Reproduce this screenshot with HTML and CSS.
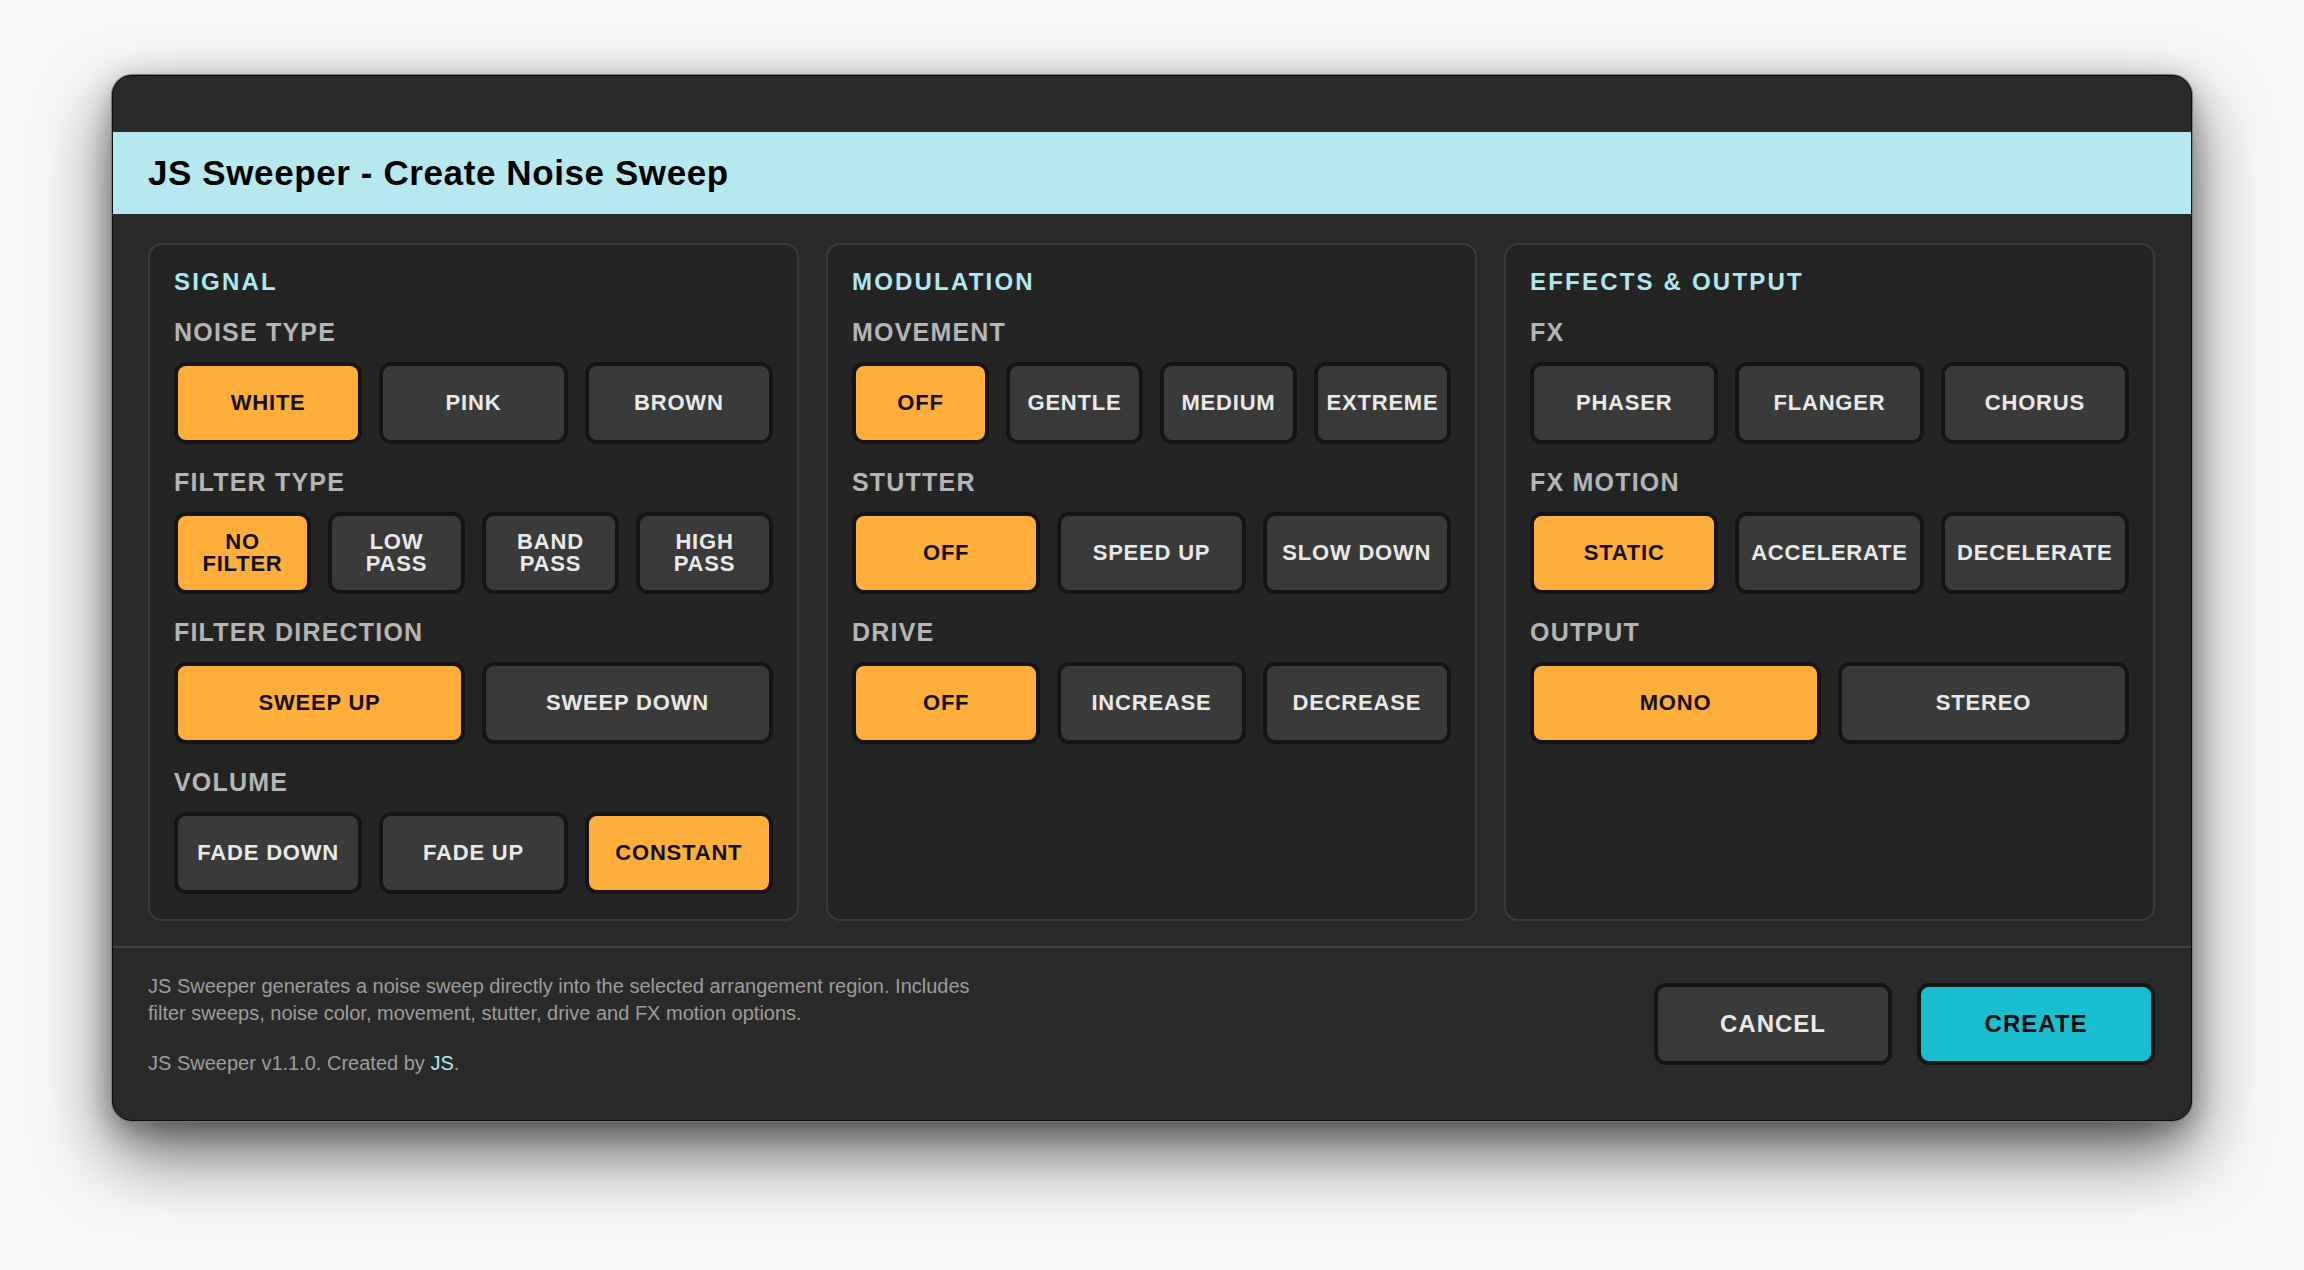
FILE: index.html
```html
<!DOCTYPE html>
<html lang="en">
<head>
    <meta charset="UTF-8">
    <meta name="viewport" content="width=device-width, initial-scale=1.0">
    <title>JS Sweeper - Create Noise Sweep</title>
    <link rel="stylesheet" href="styles.css">
</head>
<body>
    <div class="window">
        <div class="titlebar"></div>

        <div class="header">
            <h1>JS Sweeper - Create Noise Sweep</h1>
        </div>

        <div class="panels">
            <div class="panel">
                <h2 class="panel-title">Signal</h2>

                <div class="group">
                    <h3 class="label">Noise Type</h3>
                    <div class="row">
                        <button class="btn on">White</button>
                        <button class="btn">Pink</button>
                        <button class="btn">Brown</button>
                    </div>
                </div>

                <div class="group">
                    <h3 class="label">Filter Type</h3>
                    <div class="row">
                        <button class="btn on">No<br>Filter</button>
                        <button class="btn">Low<br>Pass</button>
                        <button class="btn">Band<br>Pass</button>
                        <button class="btn">High<br>Pass</button>
                    </div>
                </div>

                <div class="group">
                    <h3 class="label">Filter Direction</h3>
                    <div class="row">
                        <button class="btn on">Sweep Up</button>
                        <button class="btn">Sweep Down</button>
                    </div>
                </div>

                <div class="group">
                    <h3 class="label">Volume</h3>
                    <div class="row">
                        <button class="btn">Fade Down</button>
                        <button class="btn">Fade Up</button>
                        <button class="btn on">Constant</button>
                    </div>
                </div>
            </div>

            <div class="panel">
                <h2 class="panel-title">Modulation</h2>

                <div class="group">
                    <h3 class="label">Movement</h3>
                    <div class="row">
                        <button class="btn on">Off</button>
                        <button class="btn">Gentle</button>
                        <button class="btn">Medium</button>
                        <button class="btn">Extreme</button>
                    </div>
                </div>

                <div class="group">
                    <h3 class="label">Stutter</h3>
                    <div class="row">
                        <button class="btn on">Off</button>
                        <button class="btn">Speed Up</button>
                        <button class="btn">Slow Down</button>
                    </div>
                </div>

                <div class="group">
                    <h3 class="label">Drive</h3>
                    <div class="row">
                        <button class="btn on">Off</button>
                        <button class="btn">Increase</button>
                        <button class="btn">Decrease</button>
                    </div>
                </div>
            </div>

            <div class="panel">
                <h2 class="panel-title">Effects &amp; Output</h2>

                <div class="group">
                    <h3 class="label">FX</h3>
                    <div class="row">
                        <button class="btn">Phaser</button>
                        <button class="btn">Flanger</button>
                        <button class="btn">Chorus</button>
                    </div>
                </div>

                <div class="group">
                    <h3 class="label">FX Motion</h3>
                    <div class="row">
                        <button class="btn on">Static</button>
                        <button class="btn">Accelerate</button>
                        <button class="btn">Decelerate</button>
                    </div>
                </div>

                <div class="group">
                    <h3 class="label">Output</h3>
                    <div class="row">
                        <button class="btn on">Mono</button>
                        <button class="btn">Stereo</button>
                    </div>
                </div>
            </div>
        </div>

        <div class="footer">
            <div class="about">
                <p>JS Sweeper generates a noise sweep directly into the selected arrangement region. Includes<br>filter sweeps, noise color, movement, stutter, drive and FX motion options.</p>
                <p class="credits">JS Sweeper v1.1.0. Created by <a href="#">JS</a>.</p>
            </div>
            <div class="actions">
                <button class="btn big">Cancel</button>
                <button class="btn big create">Create</button>
            </div>
        </div>
    </div>
</body>
</html>
```

FILE: styles.css
```css
* {
    box-sizing: border-box;
}
html {
    background-color: #f7f7f7;
}
body {
    margin: 0;
    min-height: 100vh;
    padding: 75px 112px;
    background-color: #f7f7f7;
    font-family: "Liberation Sans", Arial, sans-serif;
}
.window {
    width: 2080px;
    height: 1046px;
    background-color: #2a2a2a;
    border: 1px solid #0c0c0c;
    border-radius: 20px;
    box-shadow: 0 0 0 1px #7c7c7c, 0 32px 70px rgba(0, 0, 0, 0.6), 0 8px 28px rgba(0, 0, 0, 0.3);
    overflow: hidden;
}
.titlebar {
    height: 56px;
}
.header {
    height: 82px;
    background-color: #b5e8ef;
    padding: 0 35px;
    display: flex;
    align-items: center;
}
.header h1 {
    margin: 0;
    font-size: 35px;
    font-weight: bold;
    letter-spacing: 0.6px;
    color: #000;
}
.panels {
    display: grid;
    grid-template-columns: repeat(3, 1fr);
    gap: 27px;
    padding: 29px 36px 25px 35px;
}
.panel {
    height: 678px;
    background-color: #242424;
    border: 2px solid #3a3a3a;
    border-radius: 14px;
    padding: 25px 24px 24px;
}
.panel-title {
    margin: 0;
    font-size: 24px;
    line-height: 24px;
    font-weight: bold;
    letter-spacing: 2.2px;
    text-transform: uppercase;
    color: #aee8f0;
}
.group {
    margin-top: 26px;
}
.label {
    margin: 0 0 17px;
    font-size: 25px;
    line-height: 25px;
    font-weight: bold;
    letter-spacing: 1.2px;
    text-transform: uppercase;
    color: #b5b5b5;
}
.row {
    display: flex;
    gap: 17px;
}
.btn {
    flex: 1;
    height: 82px;
    padding: 0 4px;
    display: flex;
    align-items: center;
    justify-content: center;
    text-align: center;
    background-color: #3a3a3a;
    border: 4px solid #151515;
    border-radius: 12px;
    color: #e9e9e9;
    font-family: "Liberation Sans", Arial, sans-serif;
    font-size: 22px;
    line-height: 22px;
    font-weight: bold;
    letter-spacing: 0.8px;
    text-transform: uppercase;
    cursor: pointer;
}
.btn.on {
    background-color: #ffad3b;
    color: #111;
}
.footer {
    height: 174px;
    border-top: 2px solid #444;
    padding: 25px 36px 0 35px;
    display: flex;
    justify-content: space-between;
    align-items: flex-start;
}
.about p {
    margin: 0;
    font-size: 20px;
    line-height: 27px;
    color: #9d9d9d;
}
.about .credits {
    margin-top: 23px;
}
.about a {
    color: #aee8f0;
    text-decoration: none;
}
.actions {
    margin-top: 10px;
    display: flex;
    gap: 25px;
}
.btn.big {
    flex: none;
    width: 238px;
    font-size: 24px;
    letter-spacing: 1px;
}
.btn.create {
    background-color: #19bed0;
    color: #0c0c0c;
}
```
